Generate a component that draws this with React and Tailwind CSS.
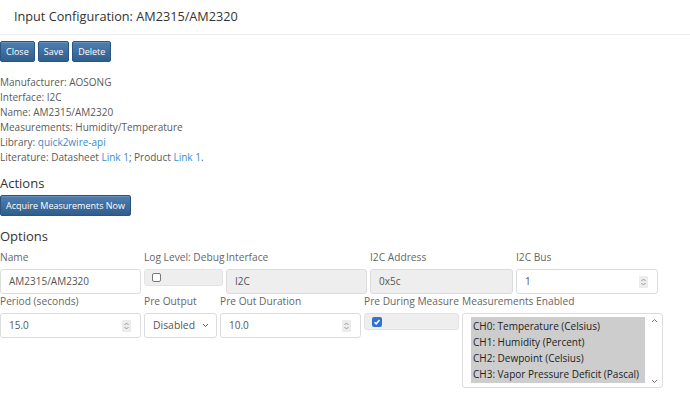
import React from "react";

const font = { fontFamily: '"Open Sans", "Noto Sans", sans-serif' };

const Btn = ({ children, className = "" }) => (
  <button
    className={`h-[21px] px-[5px] rounded-[2px] border border-[#2a5580] bg-gradient-to-b from-[#4f7eb0] to-[#2f5e8e] text-white text-[9px] leading-none shadow-[inset_0_1px_0_rgba(255,255,255,0.15)] ${className}`}
  >
    {children}
  </button>
);

const Spinner = () => (
  <span className="flex h-[12px] w-[9px] items-center justify-center rounded-[1px] bg-[#ececec]">
    <svg width="7" height="10" viewBox="0 0 7 10" fill="none" stroke="#9a9a9a" strokeWidth="1">
      <path d="M1.5 4 L3.5 2 L5.5 4" />
      <path d="M1.5 6 L3.5 8 L5.5 6" />
    </svg>
  </span>
);

const Label = ({ children }) => (
  <div className="h-[15px] mb-[4px] whitespace-nowrap text-[10.2px] leading-[15px] text-[#666]">{children}</div>
);

const TextBox = ({ value, gray, spin, className = "" }) => (
  <div
    className={`flex h-[25px] items-center justify-between rounded-[3px] border border-[#dcdcdc] pl-[8px] pr-[9px] text-[10px] text-[#555] ${
      gray ? "bg-[#eeeeee]" : "bg-white"
    } ${className}`}
  >
    <span>{value}</span>
    {spin && <Spinner />}
  </div>
);

const Check = ({ checked }) =>
  checked ? (
    <span className="flex h-[10px] w-[10px] items-center justify-center rounded-[2px] bg-[#2f72d0]">
      <svg width="8" height="8" viewBox="0 0 8 8" fill="none" stroke="white" strokeWidth="1.5">
        <path d="M1.5 4.2 L3.2 5.8 L6.5 2" />
      </svg>
    </span>
  ) : (
    <span className="h-[9px] w-[9px] rounded-[2px] border border-[#777] bg-white" />
  );

const CheckCell = ({ checked, className = "" }) => (
  <div className={`flex h-[17px] items-center rounded-[3px] border border-[#e3e3e3] bg-[#eeeeee] pl-[7px] ${className}`}>
    <Check checked={checked} />
  </div>
);

export default function App() {
  const channels = [
    "CH0: Temperature (Celsius)",
    "CH1: Humidity (Percent)",
    "CH2: Dewpoint (Celsius)",
    "CH3: Vapor Pressure Deficit (Pascal)",
  ];
  return (
    <div className="h-[393px] w-[690px] overflow-hidden bg-white text-[#555]" style={font}>
      {/* Header */}
      <div className="flex h-[35px] items-center border-b border-[#eeeeee] pl-[14px] text-[12.7px] text-[#333]">
        Input Configuration: AM2315/AM2320
      </div>

      {/* Buttons */}
      <div className="mt-[6px] flex gap-[3px]">
        <Btn>Close</Btn>
        <Btn>Save</Btn>
        <Btn>Delete</Btn>
      </div>

      {/* Info */}
      <div className="mt-[13px] text-[10px] leading-[15px] text-[#5a5a5a]">
        <div>Manufacturer: AOSONG</div>
        <div>Interface: I2C</div>
        <div>Name: AM2315/AM2320</div>
        <div>Measurements: Humidity/Temperature</div>
        <div>
          Library: <span className="text-[#3a8cc9]">quick2wire-api</span>
        </div>
        <div>
          Literature: Datasheet <span className="text-[#3a8cc9]">Link 1</span>; Product{" "}
          <span className="text-[#3a8cc9]">Link 1</span>.
        </div>
      </div>

      {/* Actions */}
      <div className="mt-[8px] h-[20px] text-[13px] leading-[20px] text-[#333]">Actions</div>
      <div className="mt-[2px] flex">
        <Btn>Acquire Measurements Now</Btn>
      </div>

      {/* Options */}
      <div className="mt-[10px] h-[20px] text-[13px] leading-[20px] text-[#333]">Options</div>

      <div className="mt-[4px] flex gap-[3px]">
        <div className="w-[141px]">
          <Label>Name</Label>
          <TextBox value="AM2315/AM2320" />
        </div>
        <div className="w-[79px]">
          <Label>Log Level: Debug</Label>
          <CheckCell />
        </div>
        <div className="w-[141px]">
          <Label>Interface</Label>
          <TextBox value="I2C" gray />
        </div>
        <div className="w-[143px]">
          <Label>I2C Address</Label>
          <TextBox value="0x5c" gray />
        </div>
        <div className="w-[142px]">
          <Label>I2C Bus</Label>
          <TextBox value="1" spin />
        </div>
      </div>

      <div className="flex gap-[3px]">
        <div className="w-[141px]">
          <Label>Period (seconds)</Label>
          <TextBox value="15.0" spin />
        </div>
        <div className="w-[73px]">
          <Label>Pre Output</Label>
          <div className="flex h-[25px] items-center justify-between rounded-[3px] border border-[#dcdcdc] bg-white pl-[8px] pr-[7px] text-[10.4px] text-[#555]">
            <span>Disabled</span>
            <svg width="7" height="5" viewBox="0 0 7 5" fill="none" stroke="#666" strokeWidth="1">
              <path d="M1 1 L3.5 3.5 L6 1" />
            </svg>
          </div>
        </div>
        <div className="w-[141px]">
          <Label>Pre Out Duration</Label>
          <TextBox value="10.0" spin />
        </div>
        <div className="w-[95px]">
          <Label>Pre During Measure</Label>
          <CheckCell checked />
        </div>
        <div className="w-[201px]">
          <Label>Measurements Enabled</Label>
          <div className="flex h-[75px] rounded-[3px] border border-[#dcdcdc] bg-white pb-[2px] pt-[3px] pl-[8px] pr-[3px]">
            <div className="flex-1">
              <div className="w-[174px] bg-[#cdcdcd] py-[1px]">
                {channels.map((c) => (
                  <div key={c} className="h-[16px] whitespace-nowrap pl-[2px] text-[10px] leading-[16px] text-[#222]">
                    {c}
                  </div>
                ))}
              </div>
            </div>
            <div className="flex w-[10px] flex-col items-center justify-between py-[1px]">
              <svg width="7" height="5" viewBox="0 0 7 5" fill="none" stroke="#777" strokeWidth="1">
                <path d="M1 4 L3.5 1.5 L6 4" />
              </svg>
              <svg width="7" height="5" viewBox="0 0 7 5" fill="none" stroke="#777" strokeWidth="1">
                <path d="M1 1 L3.5 3.5 L6 1" />
              </svg>
            </div>
          </div>
        </div>
      </div>
    </div>
  );
}
